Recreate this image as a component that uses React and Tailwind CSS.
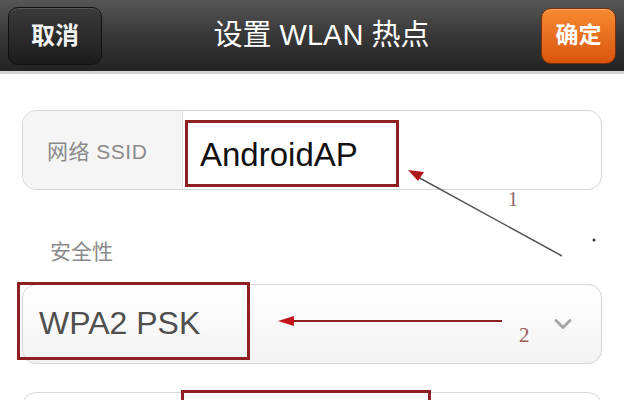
import { ChevronDown } from 'lucide-react'

const cjk = { fontFamily: '"Liberation Sans", "Noto Sans CJK SC", sans-serif' }

export default function App() {
  return (
    <div className="relative w-[624px] h-[400px] overflow-hidden bg-white" style={cjk}>
      {/* Header */}
      <div className="flex items-center justify-between h-[74px] px-2 bg-gradient-to-b from-[#565656] via-[#383838] to-[#232323] border-b-[3px] border-[#d4d4d4]">
        <button className="w-[94px] h-[58px] rounded-[10px] border border-[#111] bg-gradient-to-b from-[#3b3b3b] to-[#1c1c1c] shadow-[inset_0_1px_0_rgba(255,255,255,0.15)] text-[24px] font-bold text-[#f2f2f2]">
          取消
        </button>
        <h1 className="text-[29px] text-white">设置 WLAN 热点</h1>
        <button className="w-[75px] h-[56px] rounded-[10px] border border-[#7a2f05] bg-gradient-to-b from-[#f68a30] to-[#d9540a] shadow-[inset_0_1px_0_rgba(255,255,255,0.3)] text-[23px] font-bold text-white">
          确定
        </button>
      </div>

      {/* Body */}
      <div className="px-[22px] pt-[36px]">
        {/* SSID */}
        <div className="relative flex h-[80px] rounded-[14px] border border-[#d6d6d6]">
          <div className="flex items-center w-[160px] pl-[24px] pt-[4px] rounded-l-[14px] bg-[#f5f5f5] border-r border-[#dedede] text-[21px] tracking-[0.5px] text-[#8a8a8a]">
            网络 SSID
          </div>
          <div className="flex-1" />
          <div className="absolute left-[162px] top-[9px] w-[214px] h-[67px] border-[3px] border-[#8e1f22] flex items-center pl-[12px] pt-[2px] text-[33px] text-[#111]">
            AndroidAP
          </div>
        </div>

        {/* Security */}
        <div className="pl-[28px] pt-[48px] pb-[18px] text-[21px] leading-[28px] text-[#8a8a8a]">安全性</div>
        <div className="relative flex items-center justify-end h-[80px] rounded-[14px] border border-[#d6d6d6] bg-gradient-to-b from-white to-[#f3f3f3] pr-[24px]">
          <ChevronDown size={28} strokeWidth={2.5} className="text-[#a5a5a5]" />
          <div className="absolute left-[-6px] top-[-3px] w-[233px] h-[78px] border-[3px] border-[#8e1f22] flex items-center pl-[19px] pt-[4px] text-[32px] text-[#4f4f4f]">
            WPA2 PSK
          </div>
        </div>

        {/* Password */}
        <div className="relative mt-[28px] h-[80px] rounded-[14px] border border-[#d6d6d6]">
          <div className="absolute left-[158px] top-[-3px] w-[250px] h-[80px] border-[3px] border-[#8e1f22]" />
        </div>
      </div>

      {/* Annotations */}
      <svg className="absolute left-0 top-0 pointer-events-none" width="624" height="400">
        <line x1="562" y1="256" x2="416" y2="176" stroke="#555" strokeWidth="1.5" />
        <polygon points="408,170 424,172 418,181" fill="#b0171c" />
        <circle cx="594" cy="240" r="1.5" fill="#333" />
        <line x1="292" y1="321" x2="502" y2="321" stroke="#8e1f22" strokeWidth="2" />
        <polygon points="278,321 294,316 294,326" fill="#c2161c" />
        <text x="508" y="206" fontSize="20" fill="#8a6a66" fontFamily="Liberation Serif, serif">1</text>
        <text x="519" y="342" fontSize="21" fill="#9a5a55" fontFamily="Liberation Serif, serif">2</text>
      </svg>
    </div>
  )
}
